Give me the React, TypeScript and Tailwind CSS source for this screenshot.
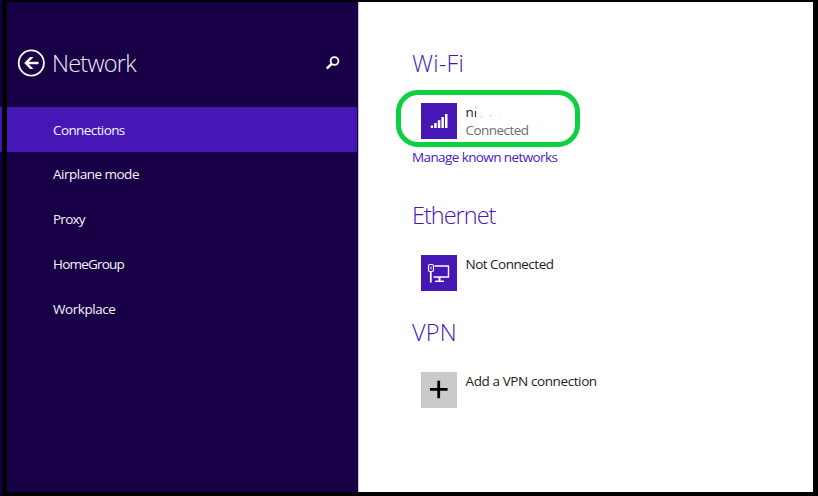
import type { ReactNode } from "react";

const navItems = [
  { label: "Connections", spacing: "tracking-[-0.6px]" },
  { label: "Airplane mode", spacing: "tracking-[-0.5px]" },
  { label: "Proxy", spacing: "tracking-[-0.75px]" },
  { label: "HomeGroup", spacing: "tracking-[-0.8px]" },
  { label: "Workplace", spacing: "tracking-[-0.45px]" },
];

function BackIcon() {
  return (
    <svg className="block h-7 w-7" viewBox="0 0 28 28" fill="none" stroke="#fff">
      <circle cx="14.300" cy="14" r="12.600" strokeWidth="1.800" />
      <path d="M21.500 14H9" strokeWidth="2.500" />
      <path d="M13 8h3.500L10.700 14l5.800 6H13l-5.800-6z" fill="#fff" stroke="none" />
    </svg>
  );
}

function SearchIcon() {
  return (
    <svg className="block h-[14px] w-[14px]" viewBox="0 0 14 14" fill="none" stroke="#fff">
      <circle cx="8.500" cy="5" r="3.900" strokeWidth="1.800" />
      <path d="M5.700 7.900L.7 12.500" strokeWidth="2.400" />
    </svg>
  );
}

function SignalIcon() {
  return (
    <svg className="block h-9 w-9" viewBox="0 0 36 36" fill="#fff">
      <path d="M9.700 22.500h2.400V25H9.700zM13.200 20h2.500v5h-2.500zM16.800 17.200h2.500V25h-2.500zM20.400 14h2.500v11h-2.500zM24 11h2.500v14H24z" />
    </svg>
  );
}

function EthernetIcon() {
  return (
    <svg className="block h-9 w-9" viewBox="0 0 36 36" fill="none" stroke="#fff">
      <path d="M13.500 11h14v11h-15" strokeWidth="1.400" />
      <path d="M18.500 22v4" strokeWidth="2" />
      <path d="M14 26.300h9" strokeWidth="1.500" />
      <rect x="7.500" y="9.500" width="5" height="7" rx="1.500" strokeWidth="1.200" />
      <path d="M10 11.500v3" strokeWidth="1" />
      <path d="M9.800 16.500v11" strokeWidth="1.800" />
    </svg>
  );
}

function PlusIcon() {
  return (
    <svg className="block h-9 w-9" viewBox="0 0 36 36" fill="none" stroke="#000" strokeWidth="2.800">
      <path d="M9 17.400h17.600M17.700 8.800v17.400" />
    </svg>
  );
}

function Row({ icon, tile, children }: { icon: ReactNode; tile: string; children: ReactNode }) {
  return (
    <div className="flex gap-[8.5px] pl-[9px]">
      <div className={`h-9 w-9 shrink-0 ${tile}`}>{icon}</div>
      <div className="whitespace-nowrap text-[13.5px] leading-[18px] text-[#1c1c1c]">{children}</div>
    </div>
  );
}

export default function App() {
  return (
    <div className="flex h-[496px] w-[818px] overflow-hidden bg-black font-['Open_Sans','Noto_Sans',sans-serif]">
      <div className="w-[2px] shrink-0 bg-[#160045] pt-[107px]">
        <div className="h-[45px] bg-[#4617b4]" />
      </div>
      <aside className="mt-[2px] mb-1 ml-[5px] w-[351px] shrink-0 bg-[#180046]">
        <header className="flex h-[105px] items-center pr-[18px] pl-[10px]">
          <div className="mt-[17px]"><BackIcon /></div>
          <h1 className="mt-[17px] ml-[7px] grow text-[23.500px] leading-8 font-light tracking-[-0.75px] text-[#eeeaf4]">Network</h1>
          <div className="mt-[17px]"><SearchIcon /></div>
        </header>
        <nav>
          {navItems.map((item, i) => (
            <div
              key={item.label}
              className={`flex h-[44.8px] w-[350px] items-center pt-[0.5px] pl-[46px] text-[13.5px] text-[#f6f3fb] ${item.spacing} ${i === 0 ? "bg-[#4617b4]" : ""}`}
            >
              {item.label}
            </div>
          ))}
        </nav>
      </aside>
      <main className="mt-[2px] mb-1 w-[455px] shrink-0 border-l border-[#c9c1d8] bg-white pl-[53px]">
        <section className="h-[152px] pt-[45px]">
          <h2 className="h-8 text-[23.500px] leading-8 font-light tracking-[0.2px] text-[#4617b4]">Wi-Fi</h2>
          <div className="-ml-4 mt-[11px] h-[57px] w-[184px] rounded-[22px] border-[5px] border-[#0bd03f] pt-[8px] pl-[11px]">
            <Row icon={<SignalIcon />} tile="bg-[#4617b4]">
              <div className="flex">
                <span>n</span>
                <svg className="block h-[18px] w-8" viewBox="0 0 32 18" fill="none">
                  <path d="M1.500 8v6" stroke="#333" strokeWidth="1.200" />
                  <path d="M1 4.500h1M8 13l-1 1.500M16 12.500h1M25 11.500h.6" stroke="#999" strokeWidth=".8" />
                </svg>
              </div>
              <div className="tracking-[-0.55px] text-[#6e6e6e]">Connected</div>
            </Row>
          </div>
          <a className="block text-[13.5px] leading-[20px] tracking-[-0.6px] text-[#4a1acb]">Manage known networks</a>
        </section>
        <section className="h-[117px] pt-[45px]">
          <h2 className="mb-[24px] h-8 text-[23.500px] leading-8 font-light tracking-[-1px] text-[#4617b4]">Ethernet</h2>
          <Row icon={<EthernetIcon />} tile="bg-[#4617b4]"><div className="tracking-[-0.5px]">Not Connected</div></Row>
        </section>
        <section className="pt-[45px]">
          <h2 className="mb-[24px] h-8 text-[23.500px] leading-8 font-light tracking-[0.2px] text-[#4617b4]">VPN</h2>
          <Row icon={<PlusIcon />} tile="bg-[#cacaca]"><div className="tracking-[-0.4px]">Add a VPN connection</div></Row>
        </section>
      </main>
    </div>
  );
}
